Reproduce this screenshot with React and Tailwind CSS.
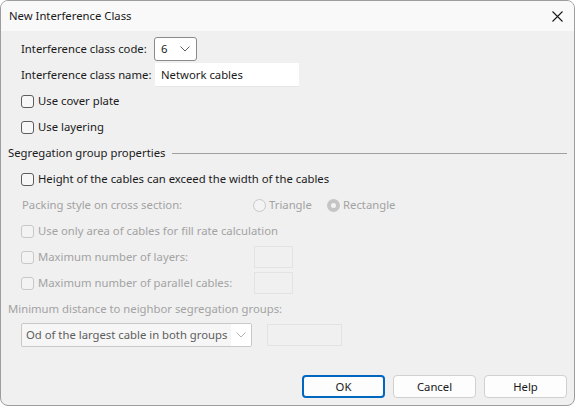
import React from 'react';

const font = { fontFamily: '"Noto Sans", "Segoe UI", sans-serif' };

function Check({ disabled, label }) {
  return (
    <label className={`flex items-center h-[20px] whitespace-nowrap ${disabled ? 'text-[#a3a3a3]' : 'text-[#1a1a1a]'}`}>
      <span
        className={`w-[13px] h-[13px] shrink-0 rounded-[3px] border ${disabled ? 'border-[#c8c8c8] bg-[#f3f3f3]' : 'border-[#5d5d5d] bg-[#f7f7f7]'}`}
      />
      <span className="ml-[4px]">{label}</span>
    </label>
  );
}

function Radio({ checked, label }) {
  return (
    <span className="flex items-center text-[#a3a3a3]">
      <span
        className={`w-[13px] h-[13px] rounded-full flex items-center justify-center ${checked ? 'bg-[#c5c5c5]' : 'border border-[#c8c8c8] bg-[#f3f3f3]'}`}
      >
        {checked && <span className="w-[5px] h-[5px] rounded-full bg-[#f3f3f3]" />}
      </span>
      <span className="ml-[3px]">{label}</span>
    </span>
  );
}

function Chevron({ color = '#5d5d5d' }) {
  return (
    <svg width="10" height="6" viewBox="0 0 10 6" fill="none">
      <path d="M0.5 0.5 L5 5 L9.5 0.5" stroke={color} strokeWidth="1" />
    </svg>
  );
}

export default function App() {
  return (
    <div className="w-[575px] h-[406px] bg-white" style={font}>
      <div className="w-[575px] h-[406px] border border-[#9d9d9d] rounded-[8px] overflow-hidden bg-[#f0f0f0] flex flex-col text-[11.3px] leading-[16px]">
        {/* title bar */}
        <div className="h-[30px] shrink-0 bg-[#f9f9f9] flex items-center justify-between pl-[8px] pr-[11px] text-[#1a1a1a]">
          <span>New Interference Class</span>
          <svg width="11" height="11" viewBox="0 0 11 11">
            <path d="M0.5 0.5 L10.5 10.5 M10.5 0.5 L0.5 10.5" stroke="#1a1a1a" strokeWidth="1.1" />
          </svg>
        </div>

        <div className="flex flex-col pl-[20px] pr-[7px] pt-[5px] text-[#1a1a1a]">
          <div className="flex items-center h-[25px] whitespace-nowrap">
            <span className="w-[133px] shrink-0">Interference class code:</span>
            <div className="w-[43px] h-[24px] bg-white border border-[#8a8a8a] rounded-[3px] flex items-center justify-between pl-[6px] pr-[6px]">
              <span>6</span>
              <Chevron />
            </div>
          </div>
          <div className="flex items-center h-[26px] mt-[1px] whitespace-nowrap">
            <span className="w-[134px] shrink-0">Interference class name:</span>
            <div className="w-[144px] h-[24px] bg-white border-b border-[#e6e6e6] flex items-center pl-[6px]">
              Network cables
            </div>
          </div>
          <div className="mt-[3px] flex flex-col gap-[6px]">
            <Check label="Use cover plate" />
            <Check label="Use layering" />
          </div>
        </div>

        <div className="flex items-center mt-[6px] pl-[7px] pr-[7px] h-[20px] text-[#1a1a1a] whitespace-nowrap">
          <span>Segregation group properties</span>
          <span className="flex-1 h-px bg-[#a0a0a0] ml-[7px]" />
        </div>

        <div className="flex flex-col pl-[20px] pt-[6px] gap-[6px]">
          <Check label="Height of the cables can exceed the width of the cables" />
          <div className="flex items-center h-[20px] text-[#a3a3a3] whitespace-nowrap">
            <span className="w-[232px] shrink-0 pl-px">Packing style on cross section:</span>
            <span className="w-[74px] shrink-0">
              <Radio label="Triangle" />
            </span>
            <Radio checked label="Rectangle" />
          </div>
          <Check disabled label="Use only area of cables for fill rate calculation" />
          <div className="flex items-center justify-between w-[272px] h-[20px]">
            <Check disabled label="Maximum number of layers:" />
            <span className="w-[39px] h-[22px] -my-px border border-[#e3e3e3]" />
          </div>
          <div className="flex items-center justify-between w-[272px] h-[20px]">
            <Check disabled label="Maximum number of parallel cables:" />
            <span className="w-[39px] h-[22px] -my-px border border-[#e3e3e3]" />
          </div>
        </div>

        <div className="pl-[7px] mt-[6px] h-[20px] flex items-center text-[#a3a3a3] whitespace-nowrap">
          Minimum distance to neighbor segregation groups:
        </div>
        <div className="pl-[20px] mt-[4px] flex items-center">
          <div className="w-[231px] h-[24px] border border-[#c9c9c9] rounded-[2px] bg-[#f6f6f6] flex items-center justify-between pl-[4px] text-[#5e5e5e] whitespace-nowrap overflow-hidden">
            <span>Od of the largest cable in both groups</span>
            <span className="h-full w-[20px] flex items-center justify-center bg-white"><Chevron color="#b5b5b5" /></span>
          </div>
          <span className="ml-[15px] w-[75px] h-[22px] border border-[#e3e3e3]" />
        </div>

        <div className="mt-auto mb-[7px] flex justify-end gap-[8px] pr-[7px]">
          <button className="w-[83px] h-[23px] rounded-[4px] border-2 border-[#0067c0] bg-[#fdfdfd] text-[#1a1a1a] flex items-center justify-center">OK</button>
          <button className="w-[83px] h-[23px] rounded-[4px] border border-[#d0d0d0] bg-[#fdfdfd] text-[#1a1a1a] flex items-center justify-center">Cancel</button>
          <button className="w-[83px] h-[23px] rounded-[4px] border border-[#d0d0d0] bg-[#fdfdfd] text-[#1a1a1a] flex items-center justify-center">Help</button>
        </div>
      </div>
    </div>
  );
}
